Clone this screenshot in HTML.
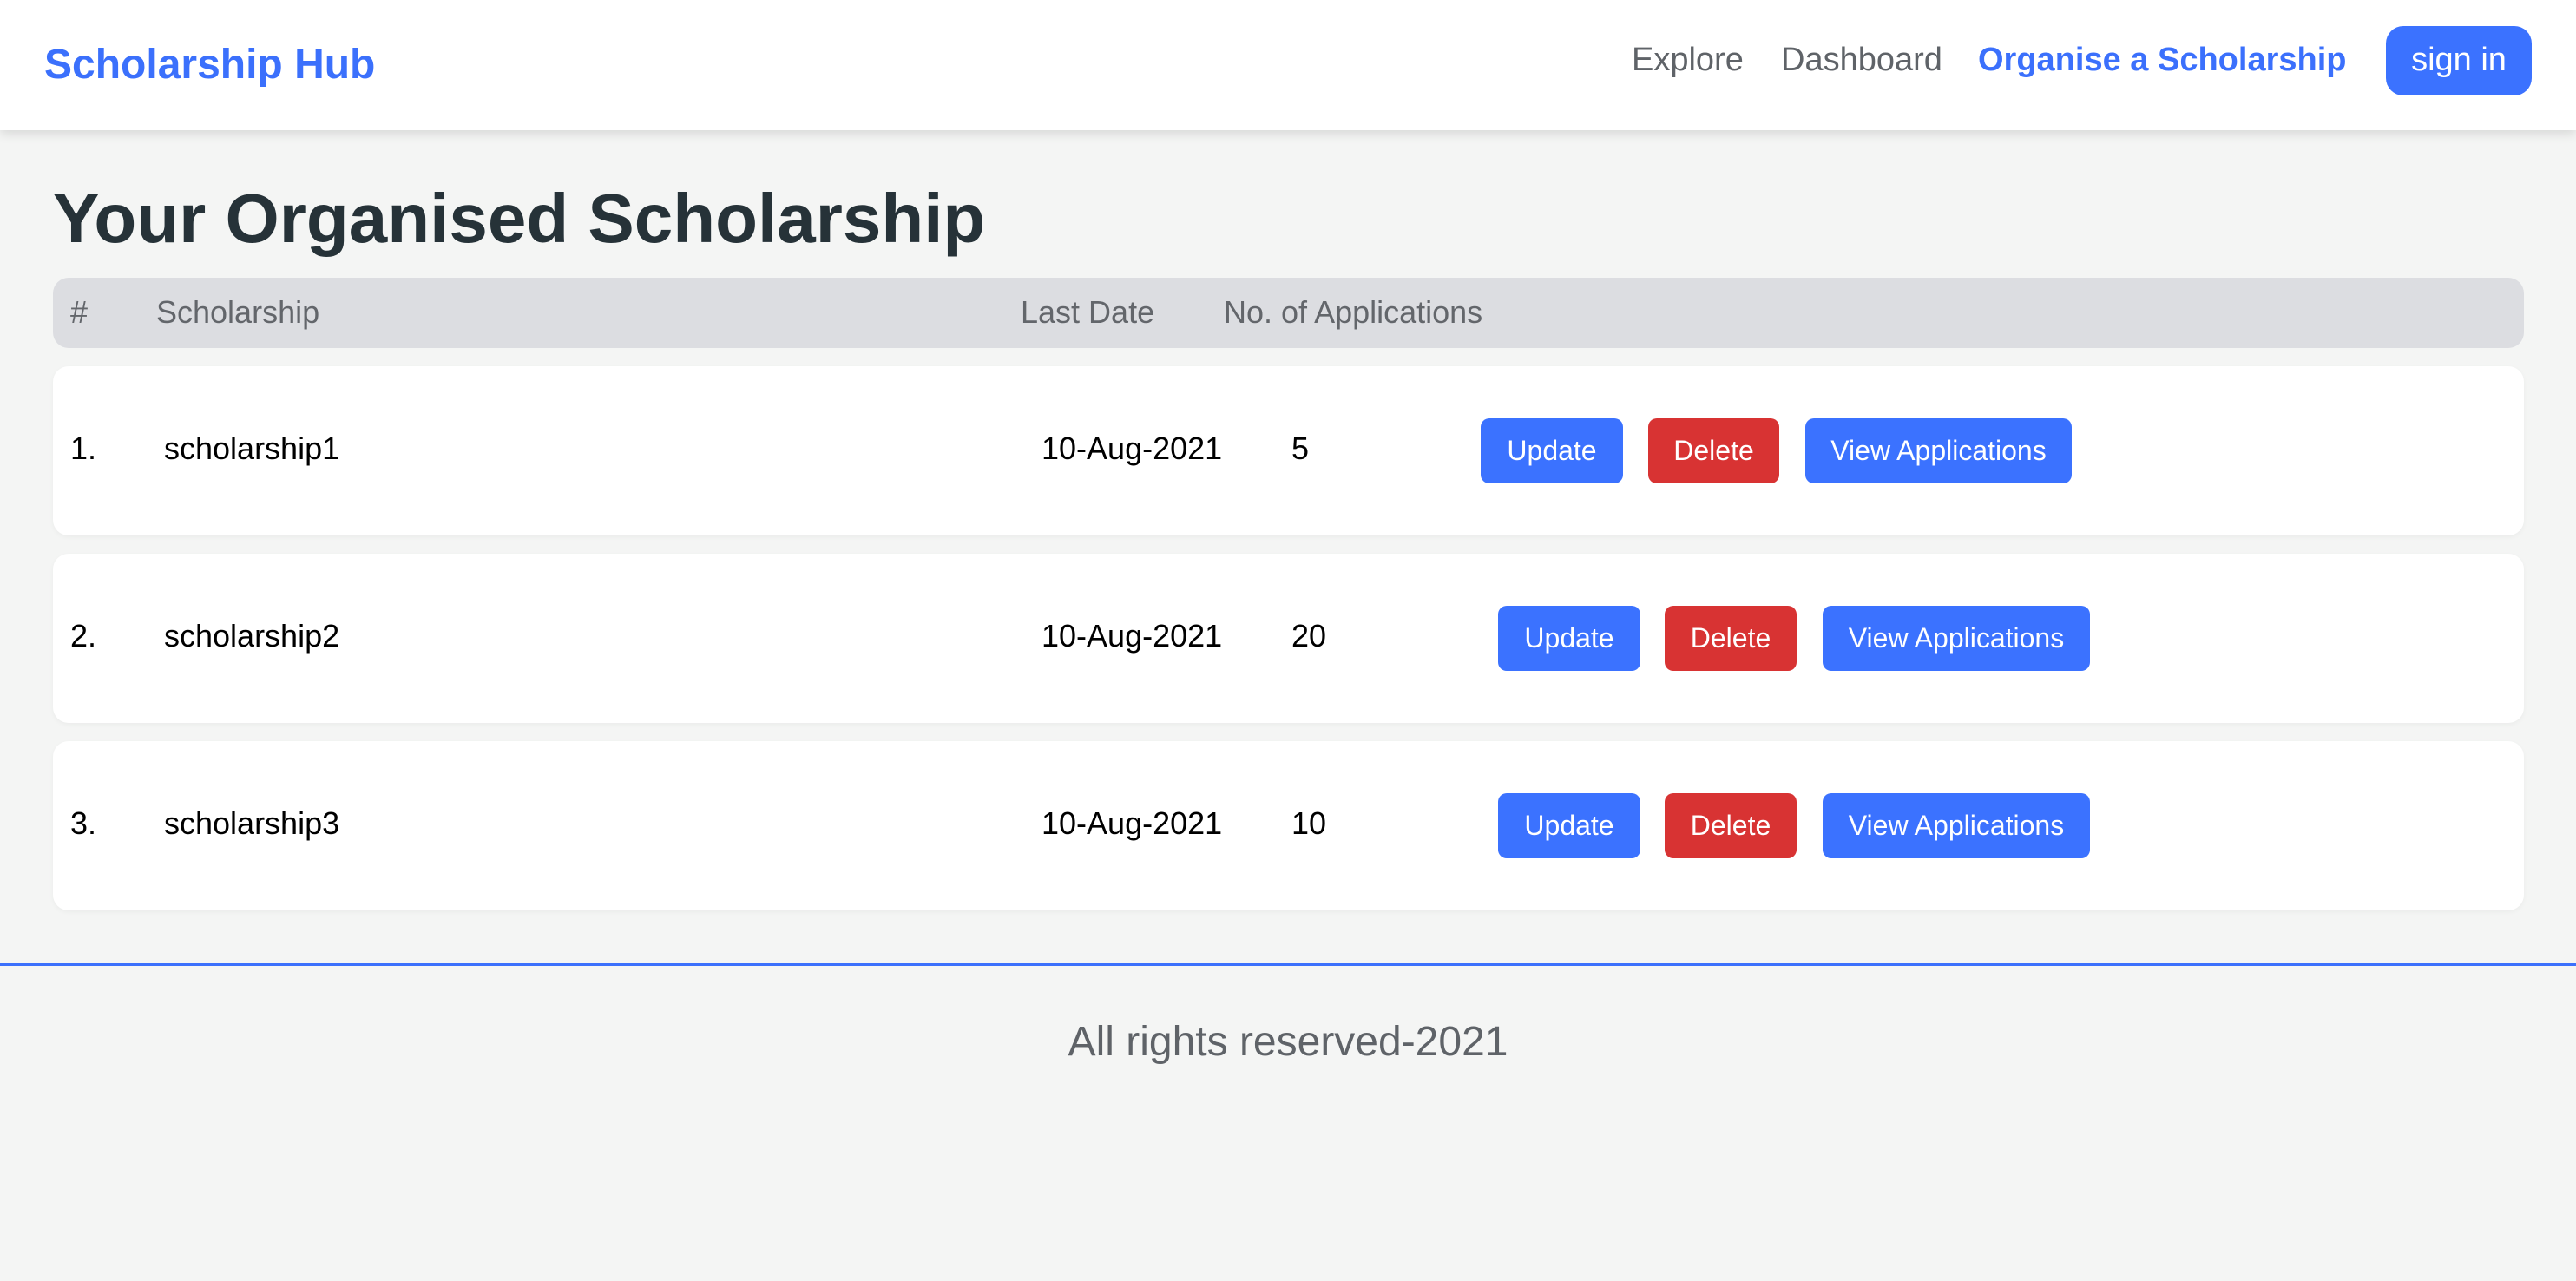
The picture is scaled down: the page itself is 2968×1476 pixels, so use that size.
<!DOCTYPE html>
<html><head><meta charset="utf-8"><style>
*{margin:0;padding:0;box-sizing:border-box}
body{width:2968px;height:1476px;background:#f4f5f4;font-family:"Liberation Sans",sans-serif;position:relative;overflow:hidden}
.a{position:absolute;white-space:nowrap}
nav{position:absolute;left:0;top:0;width:2968px;height:150px;background:#fff;box-shadow:0 4px 12px rgba(0,0,0,.12)}
.logo{left:51px;top:47px;font-size:48px;font-weight:bold;color:#3b70fc;line-height:56px}
.nl{top:46px;font-size:38px;color:#5f6368;line-height:46px}
.signin{left:2749px;top:30px;width:168px;height:80px;background:#3b72ff;border-radius:20px;color:#fff;font-size:38px;line-height:78px;text-align:center}
h1{position:absolute;left:61px;top:205px;font-size:80px;line-height:94px;color:#263238;font-weight:bold}
.hd{position:absolute;left:61px;top:320px;width:2847px;height:81px;background:#dcdde1;border-radius:18px}
.ht{top:337px;font-size:36px;color:#63666b;line-height:46px}
.card{position:absolute;left:61px;width:2847px;height:195px;background:#fff;border-radius:18px;box-shadow:0 2px 6px rgba(0,0,0,.04)}
.rt{font-size:36px;color:#000;line-height:44px}
.btn{position:absolute;height:75px;border-radius:10px;color:#fff;font-size:32px;line-height:75px;text-align:center;background:#3b72ff}
.red{background:#d83333}
.line{position:absolute;left:0;top:1110px;width:2968px;height:3px;background:#3b70fc}
.ft{left:0;width:2968px;text-align:center;top:1173px;font-size:48px;color:#5f6368;line-height:56px}
</style></head><body>
<nav>
<div class="a logo">Scholarship Hub</div>
<div class="a nl" style="left:1880px">Explore</div>
<div class="a nl" style="left:2052px">Dashboard</div>
<div class="a nl" style="left:2279px;color:#3b70fc;font-weight:bold">Organise a Scholarship</div>
<div class="a signin">sign in</div>
</nav>
<h1>Your Organised Scholarship</h1>
<div class="hd"></div>
<div class="a ht" style="left:81px">#</div>
<div class="a ht" style="left:180px">Scholarship</div>
<div class="a ht" style="left:1176px">Last Date</div>
<div class="a ht" style="left:1410px">No. of Applications</div>

<div class="card" style="top:422px"></div>
<div class="a rt" style="left:81px;top:495px">1.</div>
<div class="a rt" style="left:189px;top:495px">scholarship1</div>
<div class="a rt" style="left:1200px;top:495px">10-Aug-2021</div>
<div class="a rt" style="left:1488px;top:495px">5</div>
<div class="btn" style="left:1706px;top:482px;width:164px">Update</div>
<div class="btn red" style="left:1899px;top:482px;width:151px">Delete</div>
<div class="btn" style="left:2080px;top:482px;width:307px">View Applications</div>

<div class="card" style="top:638px"></div>
<div class="a rt" style="left:81px;top:711px">2.</div>
<div class="a rt" style="left:189px;top:711px">scholarship2</div>
<div class="a rt" style="left:1200px;top:711px">10-Aug-2021</div>
<div class="a rt" style="left:1488px;top:711px">20</div>
<div class="btn" style="left:1726px;top:698px;width:164px">Update</div>
<div class="btn red" style="left:1918px;top:698px;width:152px">Delete</div>
<div class="btn" style="left:2100px;top:698px;width:308px">View Applications</div>

<div class="card" style="top:854px"></div>
<div class="a rt" style="left:81px;top:927px">3.</div>
<div class="a rt" style="left:189px;top:927px">scholarship3</div>
<div class="a rt" style="left:1200px;top:927px">10-Aug-2021</div>
<div class="a rt" style="left:1488px;top:927px">10</div>
<div class="btn" style="left:1726px;top:914px;width:164px">Update</div>
<div class="btn red" style="left:1918px;top:914px;width:152px">Delete</div>
<div class="btn" style="left:2100px;top:914px;width:308px">View Applications</div>

<div class="line"></div>
<div class="a ft">All rights reserved-2021</div>
</body></html>
